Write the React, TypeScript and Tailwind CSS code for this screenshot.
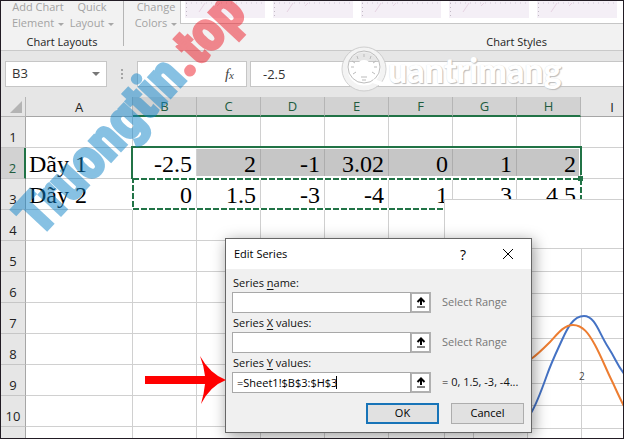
import React from "react";

const COLUMNS = ["A", "B", "C", "D", "E", "F", "G", "H", "I"];

const DATA: Record<number, string[]> = {
  2: ["Dãy 1", "-2.5", "2", "-1", "3.02", "0", "1", "2", ""],
  3: ["Dãy 2", "0", "1.5", "-3", "-4", "1", "3", "4.5", ""],
};

const ROWS = [1, 2, 3, 4, 5, 6, 7, 8, 9, 10];

function Caret() {
  return (
    <span className="ml-1 inline-block border-x-[3px] border-t-[3px] border-x-transparent border-t-[#a8a8a8] align-middle" />
  );
}

function RibbonButton({ top, bottom, className }: { top: string; bottom: string; className: string }) {
  return (
    <button
      type="button"
      className={`flex h-7 flex-col items-center justify-center leading-4 whitespace-nowrap text-[#a3a3a3] ${className}`}
    >
      <span>{top}</span>
      <span>
        {bottom}
        <Caret />
      </span>
    </button>
  );
}

function StyleThumb() {
  return (
    <button type="button" aria-label="Chart style" className="h-[17px] w-20 shrink-0 bg-[#f4eff6]">
      <svg viewBox="0 0 80 16" className="h-4 w-20" fill="none">
        <path d="M1 1H80" stroke="#d3c9d8" strokeDasharray="1 4" />
        <path d="M1.500 1V16" stroke="#c3bbc6" strokeDasharray="1 3" />
        <path d="M14 10L20 1M32 4L35 1" stroke="#e6d3e2" />
      </svg>
    </button>
  );
}

function Ribbon() {
  return (
    <div className="flex h-[50px] shrink-0 border-b border-[#c9c9c9] bg-[#f2f2f2]">
      <section className="flex w-[122px] shrink-0 flex-col justify-between">
        <div className="flex">
          <RibbonButton top="Add Chart" bottom="Element" className="w-[70px] pl-1" />
          <RibbonButton top="Quick" bottom="Layout" className="w-[42px]" />
        </div>
        <h2 className="text-center leading-4 text-[#222]">Chart Layouts</h2>
      </section>
      <div className="h-[45px] w-px shrink-0 bg-[#b5b5b5]" />
      <section className="flex min-w-0 flex-1 flex-col justify-between">
        <div className="flex">
          <RibbonButton top="Change" bottom="Colors" className="w-[56px] pl-2" />
          <div className="flex h-[23px] min-w-0 flex-1 gap-2 overflow-hidden border-b border-l border-[#c6c6c6] bg-white pl-1">
            <StyleThumb />
            <StyleThumb />
            <StyleThumb />
            <StyleThumb />
            <StyleThumb />
          </div>
        </div>
        <h2 className="pr-[76px] text-right leading-4 text-[#222]">Chart Styles</h2>
      </section>
    </div>
  );
}

function FormulaBar() {
  return (
    <div className="flex h-[46px] shrink-0 items-start bg-[#e6e6e6] pt-[10px] pl-1">
      <div className="flex h-[26px] w-[102px] shrink-0 items-center justify-between border border-[#c6c6c6] bg-white pr-1.5">
        <input
          aria-label="Name box"
          defaultValue="B3"
          className="w-16 bg-transparent pl-1.5 text-[13px] text-[#333] outline-none"
        />
        <span className="border-x-4 border-t-4 border-x-transparent border-t-[#777]" />
      </div>
      <div className="flex h-[26px] w-[30px] shrink-0 flex-col items-center justify-center gap-0.5">
        <i className="size-0.5 bg-[#a5a5a5]" />
        <i className="size-0.5 bg-[#a5a5a5]" />
        <i className="size-0.5 bg-[#a5a5a5]" />
      </div>
      <div className="flex h-[26px] w-[110px] shrink-0 items-center justify-end border border-[#c6c6c6] bg-white pr-3">
        <button
          type="button"
          aria-label="Insert function"
          className="font-['Liberation_Serif',serif] text-[15px] text-[#444] italic"
        >
          f<span className="text-[11px]">x</span>
        </button>
      </div>
      <input
        aria-label="Formula"
        defaultValue="-2.5"
        className="ml-[3px] h-[26px] min-w-0 flex-1 border border-r-0 border-[#c6c6c6] bg-white pl-3 text-[13px] text-[#333] outline-none"
      />
    </div>
  );
}

function headClass(index: number) {
  if (index > 0 && index < 8) return "border-b-2 border-b-[#217346] bg-[#d2d2d2] text-[#215c3e]";
  return "border-b border-b-[#a6a6a6] bg-[#e6e6e6] text-[#222]";
}

function Sheet() {
  return (
    <table className="w-full table-fixed border-separate border-spacing-0">
      <colgroup>
        <col className="w-[25px]" />
        <col className="w-[107px]" />
        <col className="w-16" />
        <col className="w-16" />
        <col className="w-16" />
        <col className="w-16" />
        <col className="w-16" />
        <col className="w-16" />
        <col className="w-16" />
        <col />
      </colgroup>
      <thead>
        <tr className="h-5">
          <th className="border-r border-b border-[#b5b5b5] bg-[#e6e6e6] p-0">
            <svg viewBox="0 0 24 19" className="block h-[19px] w-6">
              <path d="M21 4V16H9Z" fill="#b4b4b4" />
            </svg>
          </th>
          {COLUMNS.map((name, i) => (
            <th
              key={name}
              className={`border-r border-r-[#b5b5b5] p-0 text-[13px] leading-[18px] font-normal ${headClass(i)} ${name === "I" ? "border-r-0 pl-5" : ""}`}
            >
              {name}
            </th>
          ))}
        </tr>
      </thead>
      <tbody>
        {ROWS.map((row) => (
          <tr key={row} className="h-[31px]">
            <th
              className={`border-b border-b-[#c6c6c6] p-0 pb-0.5 align-bottom text-[13px] leading-4 font-normal ${row === 2 ? "border-r-2 border-r-[#217346] bg-[#d2d2d2] text-[#215c3e]" : "border-r border-r-[#a6a6a6] bg-[#e6e6e6] text-[#222]"}`}
            >
              {row}
            </th>
            {COLUMNS.map((name, i) => (
              <td
                key={name}
                className={`border-r border-b border-[#d0d0d0] p-0 align-bottom font-['Liberation_Serif',serif] text-[24px] leading-[27px] text-black ${i === 0 ? "pl-[3px]" : "pr-1 text-right"} ${row === 2 && i > 1 && i < 8 ? "border-r-[#adadad] bg-[#c6c6c6]" : ""} ${name === "I" ? "border-r-0" : ""}`}
              >
                {DATA[row] ? DATA[row][i] : ""}
              </td>
            ))}
          </tr>
        ))}
        <tr className="h-[31px]">
          <th className="border-r border-r-[#a6a6a6] bg-[#e6e6e6] p-0" />
          {COLUMNS.map((name) => (
            <td key={name} className="border-r border-[#d0d0d0] p-0" />
          ))}
        </tr>
      </tbody>
    </table>
  );
}

function Selection() {
  return (
    <svg
      viewBox="0 0 454 70"
      className="absolute top-[46px] left-[128px] h-[70px] w-[454px]"
      fill="none"
      aria-hidden="true"
    >
      <path d="M5 5.500H450M5.500 5V34M450.500 5V34" stroke="#fff" />
      <path d="M3 36V4H452V32" stroke="#217346" strokeWidth="2" />
      <path d="M5 34H450" stroke="#fff" strokeWidth="2" />
      <path d="M4 36H452V66H4Z" stroke="#fff" strokeWidth="2" />
      <path d="M4 36H452V66H4Z" stroke="#217346" strokeWidth="2" strokeDasharray="6 2" />
      <path d="M449 33h5v5h-5z" fill="#217346" />
    </svg>
  );
}

const CHART_LINES = [49, 72, 94, 117, 139, 161, 184, 206, 229];

function Chart() {
  return (
    <div className="absolute top-[102px] right-0 bottom-0 left-[443px] overflow-hidden border-t border-l border-[#cfcfcf] bg-white">
      <svg viewBox="0 0 180 240" className="h-[240px] w-[180px]" fill="none">
        {CHART_LINES.map((y) => (
          <path key={y} d={`M28 ${y - 0.5}H180`} stroke="#cfcfcf" />
        ))}
        <path d="M28.500 48V240M82.500 48V240M136.500 48V240" stroke="#cfcfcf" />
        <path
          d="M86 213C91 205 97 189 102 175S112 151 117 140S128 116 139 116S154 133 163 147S172 165 180 175"
          stroke="#4472c4"
          strokeWidth="2"
        />
        <path
          d="M86 159C92 155 99 148 105 142S118 125 128 125S144 134 150 145S162 171 166 179S174 197 180 208"
          stroke="#ed7d31"
          strokeWidth="2"
        />
        <text x="134" y="180" fontSize="10" fill="#444">
          2
        </text>
      </svg>
    </div>
  );
}

function Field({
  id,
  before,
  accel,
  after,
  value,
  hint,
  hintClass,
}: {
  id: string;
  before: string;
  accel: string;
  after: string;
  value: string;
  hint: string;
  hintClass: string;
}) {
  return (
    <div className="h-10">
      <label htmlFor={id} className="block h-[17px] pl-px leading-4 text-[#111]">
        {before}
        <span className="underline underline-offset-2">{accel}</span>
        {after}
      </label>
      <div className="flex h-[21px] items-center">
        <div className="relative">
          <input
            id={id}
            defaultValue={value}
            className="block h-[21px] w-[179px] border border-[#a8a8a8] bg-white pl-1 text-black outline-none"
          />
          {value && <span className="absolute top-1 left-[104px] h-[13px] w-px bg-black" />}
        </div>
        <button
          type="button"
          aria-label="Collapse dialog"
          className="-ml-px flex h-[21px] w-[21px] items-center justify-center border-2 border-[#b0b0b0] bg-white"
        >
          <svg viewBox="0 0 10 11" className="h-[11px] w-[10px]" fill="none">
            <path d="M5 8V2M1.500 5L5 1.500L8.500 5" stroke="#000" strokeWidth="2" />
            <path d="M1 10H9" stroke="#000" />
          </svg>
        </button>
        <span className={`ml-[11px] whitespace-nowrap ${hintClass}`}>{hint}</span>
      </div>
    </div>
  );
}

function EditSeriesDialog() {
  return (
    <div
      role="dialog"
      aria-label="Edit Series"
      className="absolute top-[237px] left-[224px] w-[307px] border border-[#666] bg-[#f0f0f0] shadow-[2px_3px_14px_rgba(0,0,0,0.4)]"
    >
      <div className="flex h-[30px] items-center bg-white pl-2 text-black">
        <h1 className="flex-1 text-[11px]">Edit Series</h1>
        <button type="button" aria-label="Help" className="w-11 text-[14px]">
          ?
        </button>
        <button type="button" aria-label="Close" className="flex w-[46px] justify-center">
          <svg viewBox="0 0 12 12" className="size-3" fill="none">
            <path d="M1 1L11 11M11 1L1 11" stroke="#000" />
          </svg>
        </button>
      </div>
      <div className="px-1.5 pt-[6px]">
        <Field id="series-name" before="Series " accel="n" after="ame:" value="" hint="Select Range" hintClass="text-[#777]" />
        <Field id="series-x" before="Series " accel="X" after=" values:" value="" hint="Select Range" hintClass="text-[#777]" />
        <Field
          id="series-y"
          before="Series "
          accel="Y"
          after=" values:"
          value="=Sheet1!$B$3:$H$3"
          hint="= 0, 1.5, -3, -4..."
          hintClass="text-[#111]"
        />
      </div>
      <div className="flex justify-end gap-3 pt-2 pr-[7px] pb-2">
        <button type="button" className="h-[21px] w-[73px] border-2 border-[#1874b8] bg-[#e1e1e1] text-black">
          OK
        </button>
        <button type="button" className="h-[21px] w-[73px] border border-[#adadad] bg-[#e1e1e1] text-black">
          Cancel
        </button>
      </div>
    </div>
  );
}

function RedArrow() {
  return (
    <svg viewBox="0 0 82 48" className="absolute top-[355px] left-[144px] h-12 w-[82px]" aria-hidden="true">
      <path d="M0 20H60Q59 10 55 0Q65 18 81 24Q65 30 56 48Q59 38 60 28H0Z" fill="#f00" />
    </svg>
  );
}

function BrandMark() {
  return (
    <div className="pointer-events-none absolute top-[44px] left-[339px] flex items-center">
      <svg viewBox="0 0 48 48" className="size-12" fill="none">
        <circle cx="24" cy="24" r="19" stroke="#f3f3f3" strokeWidth="5" />
        <circle cx="24" cy="24" r="22" stroke="#cfcfcf" />
        <circle cx="24" cy="22" r="16" stroke="#bdbdbd" />
        <path d="M21 27C17 24 18 16 24 16S31 24 27 27V31H21Z" stroke="#fff" strokeWidth="2" />
        <path
          d="M24 9V12M17 11L18 14M31 11L30 14M12 16L15 18M36 16L33 18M11 22H14M37 22H34M13 29L16 27M35 29L32 27M21 32H27M22 35H26"
          stroke="#bbb"
        />
        <path d="M33 36L42 39" stroke="#fff" strokeWidth="4" />
      </svg>
      <span className="pt-0.5 font-['Lato',sans-serif] text-[34px] leading-10 font-black text-white [text-shadow:1px_1px_1px_#bbb,0_0_1px_#ddd]">
        uantrimang
      </span>
    </div>
  );
}

function SiteMark() {
  return (
    <div className="pointer-events-none absolute top-[187px] left-[45px] origin-bottom-left -rotate-[47deg] font-['Liberation_Sans_Narrow','Roboto_Condensed','Open_Sans_Condensed',sans-serif] text-[56px] leading-[56px] font-bold whitespace-nowrap text-[#1184c9] opacity-50 [-webkit-text-stroke:3px_currentColor]">
      Truongtin<span className="text-[#ee1c28]">.top</span>
    </div>
  );
}

export default function App() {
  return (
    <main className="relative flex h-screen w-full flex-col overflow-hidden border border-[#221c24] bg-white font-['Open_Sans','Noto_Sans',sans-serif] text-[11px]">
      <Ribbon />
      <FormulaBar />
      <div className="relative min-h-0 flex-1 overflow-hidden">
        <Sheet />
        <Selection />
        <Chart />
      </div>
      <BrandMark />
      <SiteMark />
      <EditSeriesDialog />
      <RedArrow />
    </main>
  );
}
